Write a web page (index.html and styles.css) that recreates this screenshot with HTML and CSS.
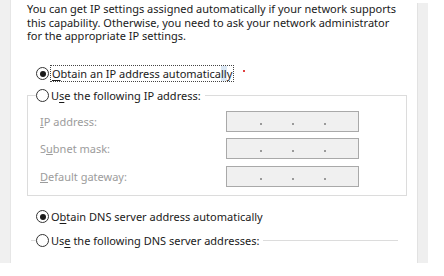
FILE: index.html
```html
<!DOCTYPE html>
<html>
<head>
<meta charset="utf-8">
<link rel="stylesheet" href="styles.css">
</head>
<body>
<div class="window">
  <div class="strip-left"></div>
  <div class="content">
    <p class="intro">You can get IP settings assigned automatically if your network supports this capability. Otherwise, you need to ask your network administrator for the appropriate IP settings.</p>

    <div class="radio-row r-ip-auto">
      <span class="radio checked"></span>
      <span class="label focus"><u>O</u>btain an IP address automatica<span class="sel">ll</span>y</span>
      <span class="mark"></span>
    </div>

    <fieldset class="group">
      <legend class="radio-row">
        <span class="radio"></span>
        <span class="label">U<u>s</u>e the following IP address:</span>
      </legend>
      <div class="field">
        <span class="field-label"><u>I</u>P address:</span>
        <span class="ipbox"><i></i><i></i><i></i></span>
      </div>
      <div class="field">
        <span class="field-label">S<u>u</u>bnet mask:</span>
        <span class="ipbox"><i></i><i></i><i></i></span>
      </div>
      <div class="field">
        <span class="field-label"><u>D</u>efault gateway:</span>
        <span class="ipbox"><i></i><i></i><i></i></span>
      </div>
    </fieldset>

    <div class="radio-row r-dns-auto">
      <span class="radio checked"></span>
      <span class="label">O<u>b</u>tain DNS server address automatically</span>
    </div>

    <fieldset class="group dns">
      <legend class="radio-row">
        <span class="radio"></span>
        <span class="label">Us<u>e</u> the following DNS server addresses:</span>
      </legend>
    </fieldset>
  </div>
  <div class="strip-right"></div>
</div>
</body>
</html>
```

FILE: styles.css
```css
html, body {
  margin: 0;
  padding: 0;
  background: #ffffff;
}
body {
  width: 444px;
  height: 276px;
  overflow: hidden;
  font-family: "Noto Sans", "Open Sans", sans-serif;
  font-size: 11px;
  color: #1a1a1a;
}
.window {
  display: flex;
  height: 263px;
  width: 428px;
}
.strip-left {
  width: 10px;
  background: #f0f0f0;
  border-right: 1px solid #e6e6e6;
}
.strip-right {
  width: 10px;
  margin-top: 3px;
  background: #efefef;
  border-left: 1px solid #e2e2e2;
}
.content {
  flex: 1;
  padding: 2px 0 0 16px;
  overflow: hidden;
}
.intro {
  margin: 0;
  line-height: 13.5px;
  width: 380px;
}
.radio-row {
  display: flex;
  align-items: center;
  height: 16px;
  white-space: nowrap;
}
.radio {
  box-sizing: border-box;
  width: 13px;
  height: 13px;
  border: 1px solid #333333;
  border-radius: 50%;
  background: #ffffff;
  margin-right: 2px;
  position: relative;
  flex: none;
}
.radio.checked::after {
  content: "";
  position: absolute;
  left: 2.5px;
  top: 2.5px;
  width: 6px;
  height: 6px;
  border-radius: 50%;
  background: #1a1a1a;
}
.label u {
  text-underline-offset: 1.5px;
}
.r-ip-auto {
  margin-top: 23px;
  margin-left: 9px;
}
.focus {
  outline: 1px dotted #444;
  outline-offset: 0;
  padding: 0 1px;
}
.sel {
  background: #dbe8f5;
}
.mark {
  width: 2px;
  height: 2px;
  background: #e04040;
  margin-left: 10px;
  margin-top: -5px;
}
.group {
  margin: 6px 0 0 0;
  width: 380px;
  box-sizing: border-box;
  border: 1px solid #dcdcdc;
  padding: 7px 0 8px 12px;
}
.group legend {
  padding: 0 4px 0 0;
  margin-left: -4px;
  background: #fff;
}
.field {
  display: flex;
  align-items: center;
  height: 21px;
  margin-bottom: 6.5px;
  color: #9c9c9c;
}
.field:last-child {
  margin-bottom: 0;
}
.field-label {
  width: 186px;
}
.ipbox {
  box-sizing: border-box;
  width: 133px;
  height: 21px;
  background: #f0f0f0;
  border: 1px solid #a9a9a9;
  display: flex;
  justify-content: center;
  align-items: flex-end;
  gap: 30px;
  padding-bottom: 6px;
}
.ipbox i {
  width: 2px;
  height: 2px;
  background: #9a9a9a;
}
.r-dns-auto {
  margin-top: 13px;
  margin-left: 9px;
}
.group.dns {
  margin: 8px 0 0 4px;
  width: 367px;
  border: none;
  border-top: 1px solid #dcdcdc;
  padding: 0;
  height: 20px;
}
.group.dns legend {
  margin-left: 5px;
}
```
